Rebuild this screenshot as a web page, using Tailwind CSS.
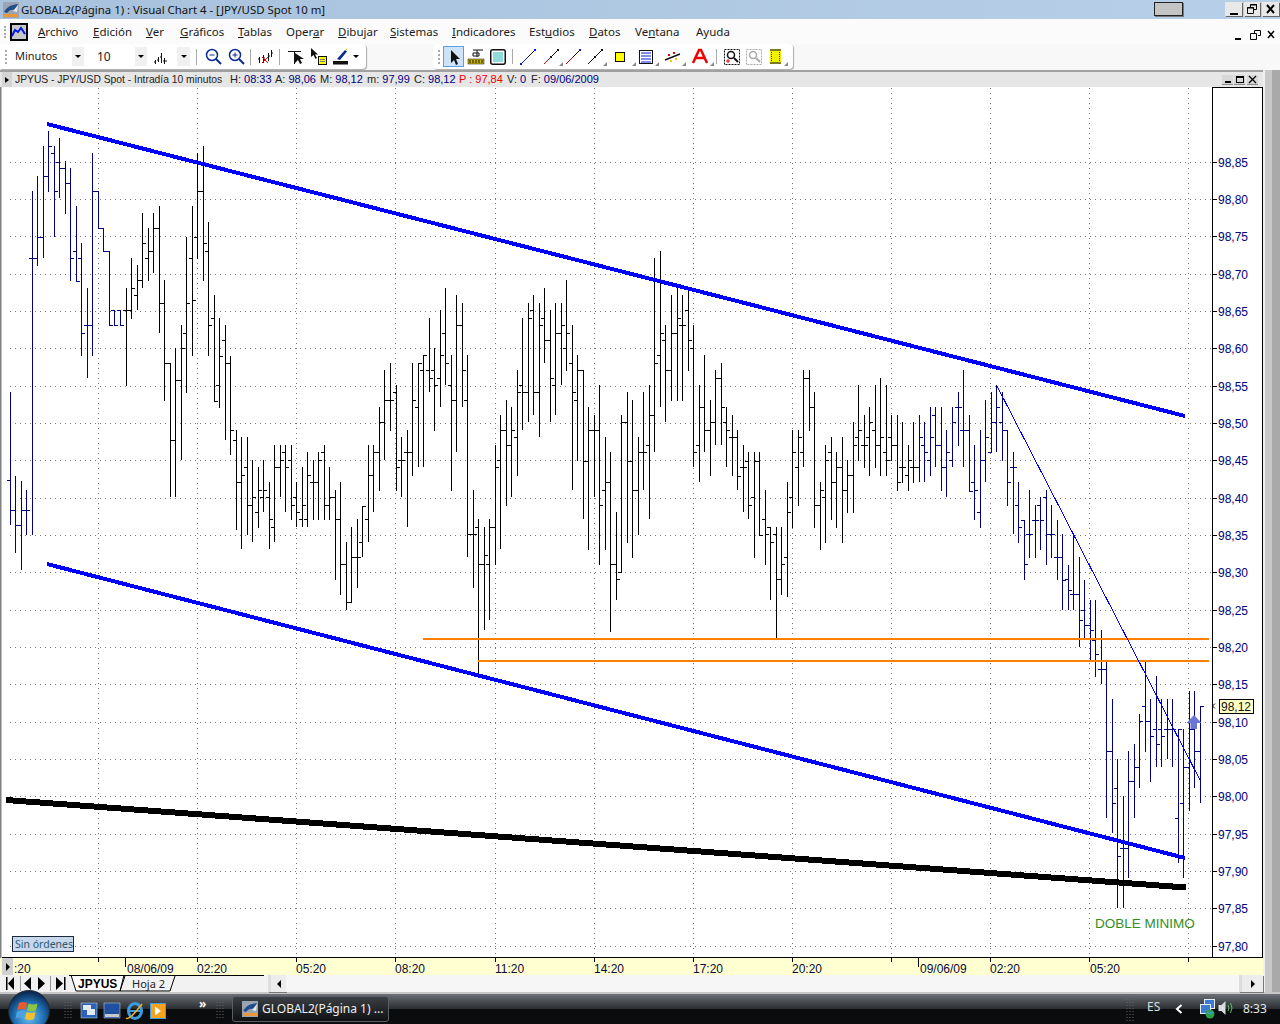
<!DOCTYPE html>
<html lang="es">
<head>
  <meta charset="UTF-8" />
  <title>GLOBAL2(Página 1) : Visual Chart 4 - [JPY/USD Spot 10 m]</title>
  <script src="https://cdn.jsdelivr.net/npm/@tailwindcss/browser@4"></script>
</head>
<body class="w-[1280px] h-[1024px] overflow-hidden bg-white text-black [font-family:'Noto_Sans',sans-serif]">

  <!-- Barra de título -->
  <div class="h-[19px] flex items-center bg-gradient-to-r from-[#a8c1dc] to-[#b7cfe8] relative">
    <svg class="ml-[3px] shrink-0" width="16" height="16" viewBox="0 0 16 16">
      <rect width="16" height="16" fill="#9aa5b1"/>
      <path d="M1 10 C5 3 10 3 15 2 L12 8 C9 7 6 8 4 11Z" fill="#1f4e8c"/>
      <path d="M10 9 L15 3 L14 10Z" fill="#e8e8e8"/>
      <rect x="1" y="12" width="14" height="3" fill="#e8973a"/>
    </svg>
    <span class="ml-[2px] text-[11.4px] leading-none text-[#111]">GLOBAL2(Página 1) : Visual Chart 4 - [JPY/USD Spot 10 m]</span>
    <div class="absolute left-[1154px] top-[2px] w-[29px] h-[14px] bg-[#c4c4c4] border border-[#222] shadow-[1px_1px_0_#777]"></div>
    <div class="absolute left-[1225px] top-[2px] flex gap-[2px]">
      <div class="w-[17px] h-[14px] bg-[#e8e8e8] shadow-[1px_1px_0_#666] flex items-end justify-center pb-[1px]"><div class="w-[8px] h-[2px] bg-black"></div></div>
      <div class="w-[16px] h-[14px] bg-[#e8e8e8] shadow-[1px_1px_0_#666]">
        <svg width="16" height="14"><path d="M6.5 5.5V2.5h6v5h-3M3.5 5.5h6v6h-6z" fill="none" stroke="#000"/><path d="M6 3h7M3 6h7" stroke="#000"/></svg>
      </div>
      <div class="w-[17px] h-[14px] bg-[#e8e8e8] shadow-[1px_1px_0_#666]">
        <svg width="17" height="14"><path d="M5 3l7 8M12 3l-7 8" stroke="#000" stroke-width="2"/></svg>
      </div>
    </div>
  </div>

  <!-- Menú -->
  <div class="h-[25px] flex items-center bg-[#fbfbfb] relative text-[11.5px] text-[#1a1a1a]">
    <div class="ml-[4px] w-[2px] h-[12px] border-l-2 border-dotted border-[#aaa]"></div>
    <svg class="ml-[4px] shrink-0" width="18" height="18" viewBox="0 0 18 18">
      <rect x="1" y="1" width="16" height="16" fill="#c8c8c8" stroke="#000" stroke-width="2"/>
      <path d="M2 13L5 7L8 9L11 5L15 11" fill="none" stroke="#0018e0" stroke-width="2"/>
    </svg>
    <div class="ml-[10px] flex">
      <span class="w-[55px]"><u>A</u>rchivo</span>
      <span class="w-[53px]"><u>E</u>dición</span>
      <span class="w-[34px]"><u>V</u>er</span>
      <span class="w-[58px]"><u>G</u>ráficos</span>
      <span class="w-[48px]"><u>T</u>ablas</span>
      <span class="w-[52px]">Oper<u>a</u>r</span>
      <span class="w-[52px]"><u>D</u>ibujar</span>
      <span class="w-[62px]"><u>S</u>istemas</span>
      <span class="w-[77px]"><u>I</u>ndicadores</span>
      <span class="w-[60px]">Est<u>u</u>dios</span>
      <span class="w-[46px]"><u>D</u>atos</span>
      <span class="w-[61px]">Ve<u>n</u>tana</span>
      <span>Ayuda</span>
    </div>
    <div class="absolute left-[1235px] top-[10px] flex items-center">
      <svg width="42" height="14" viewBox="0 0 42 14">
        <rect x="0" y="9" width="6" height="2" fill="#000"/>
        <path d="M19.5 4.5V1.5h6v5h-2.500M15.500 4.500h6v6h-6z" fill="none" stroke="#000"/>
        <path d="M33 2l6 7M39 2l-6 7" stroke="#000" stroke-width="1.500"/>
      </svg>
    </div>
  </div>

  <!-- Barras de herramientas -->
  <div class="h-[26px] bg-[#f8f8f8] relative text-[11px]">
    <div class="absolute left-0 top-0 w-[366px] h-[25px] bg-white shadow-[1px_1px_1px_#aaa] rounded-r-sm flex items-center">
      <div class="ml-[5px] w-[2px] h-[14px] border-l-2 border-dotted border-[#aaa]"></div>
      <div class="ml-[6px] w-[71px] h-[19px] bg-white flex items-center justify-between">
        <span class="ml-[2px] text-[#222]">Minutos</span>
        <span class="w-[12px] h-[19px] bg-[#f0f0f0] flex items-center justify-center"><span class="border-x-[3px] border-t-[3px] border-x-transparent border-t-black"></span></span>
      </div>
      <div class="ml-[9px] w-[54px] h-[19px] bg-white flex items-center justify-between">
        <span class="ml-[4px] text-[12px] text-[#222]">10</span>
        <span class="w-[12px] h-[19px] bg-[#f0f0f0] flex items-center justify-center"><span class="border-x-[3px] border-t-[3px] border-x-transparent border-t-black"></span></span>
      </div>
      <svg class="ml-[6px]" width="18" height="18" viewBox="0 0 18 18"><path d="M2.500 16v-4M5.500 14v-5M8.500 15V5M11.500 10v6M1 14h2M4 12h2M7 9h2M10 13h4" stroke="#111" fill="none"/></svg>
      <span class="ml-[6px] w-[13px] h-[19px] bg-[#f0f0f0] flex items-center justify-center"><span class="border-x-[3px] border-t-[3px] border-x-transparent border-t-black"></span></span>
      <div class="ml-[6px] w-px h-[16px] bg-[#aaa]"></div>
      <svg class="ml-[8px]" width="17" height="17" viewBox="0 0 17 17"><circle cx="7" cy="7" r="5.500" fill="none" stroke="#0a2a90" stroke-width="1.500"/><path d="M4.500 7h5" stroke="#0a2a90"/><path d="M11 11l5 5" stroke="#0a2a90" stroke-width="2"/></svg>
      <svg class="ml-[6px]" width="17" height="17" viewBox="0 0 17 17"><circle cx="7" cy="7" r="5.500" fill="none" stroke="#0a2a90" stroke-width="1.500"/><path d="M4.500 7h5M7 4.500v5" stroke="#0a2a90"/><path d="M11 11l5 5" stroke="#0a2a90" stroke-width="2"/></svg>
      <div class="ml-[5px] w-px h-[16px] bg-[#aaa]"></div>
      <svg class="ml-[6px]" width="17" height="17" viewBox="0 0 17 17"><path d="M2.500 15V9M6.500 15V7M11.500 13V5M14.500 9V2M1 11h2M6 10h2M11 8h2M14 5h2" stroke="#111" fill="none"/><path d="M5 9l6 6M11 9l-6 6" stroke="#e00000"/></svg>
      <div class="ml-[5px] w-px h-[16px] bg-[#aaa]"></div>
      <svg class="ml-[8px]" width="17" height="17" viewBox="0 0 17 17"><path d="M0 3.500h13M6.500 3.500V16" stroke="#111"/><path d="M7 5v10l3-3 2 4 2-1-2-4h4z" fill="#111"/></svg>
      <svg class="ml-[5px]" width="17" height="17" viewBox="0 0 17 17"><path d="M1 0v9l2.500-2 2 4 1.500-1-2-3.500h3z" fill="#111"/><rect x="8.500" y="8.500" width="8" height="8" fill="#ffff00" stroke="#111"/><path d="M10 11.500h5M10 13.500h5" stroke="#777"/></svg>
      <svg class="ml-[5px]" width="17" height="17" viewBox="0 0 17 17"><rect x="1" y="13" width="15" height="3.500" fill="#111"/><path d="M5 11L13 2l2 1.500L8 12z" fill="#0a2a90"/><path d="M13 2l2-1.500 0.500 2z" fill="#e8c93a"/></svg>
      <span class="ml-[4px] border-x-[3px] border-t-[3px] border-x-transparent border-t-black"></span>
    </div>

    <div class="absolute left-[433px] top-0 w-[360px] h-[25px] bg-white shadow-[1px_1px_1px_#aaa] rounded-sm">
      <div class="absolute left-[5px] top-[6px] w-[2px] h-[14px] border-l-2 border-dotted border-[#aaa]"></div>
      <div class="absolute left-[10px] top-[2px] w-[21px] h-[21px] bg-[#cfe3f7] border border-[#5aa0e8]"></div>
      <svg class="absolute left-0 top-0" width="360" height="25" viewBox="433 44 360 25">
        <path d="M451 50v13l3-3 2 5 2-1-2-5h4z" fill="#111"/>
        <!-- regla y marco -->
        <path d="M473 50h10M477 50v7M473 53h6v3h-6z" fill="none" stroke="#111"/>
        <rect x="468" y="59" width="16" height="5" fill="#c8b400" stroke="#111" stroke-width="0.500"/>
        <path d="M470 60v3M473 60v3M476 60v3M479 60v3M482 60v3" stroke="#111"/>
        <rect x="490.750" y="49.750" width="14.500" height="14.500" rx="2" fill="#fff" stroke="#111" stroke-width="1.500"/>
        <rect x="493" y="52" width="10" height="10" fill="#8edcdc"/>
        <line x1="512.500" x2="512.500" y1="49" y2="64" stroke="#aaa"/>
        <!-- líneas -->
        <path d="M521 64l14-14" stroke="#111"/><path d="M521 64l7-7" stroke="#0018e0"/><rect x="534" y="49" width="2" height="2" fill="#0018e0"/><rect x="520" y="63" width="2" height="2" fill="#0018e0"/>
        <path d="M544 64l14-14" stroke="#e00000"/><path d="M551 57l7-7" stroke="#111"/><rect x="557" y="49" width="2" height="2" fill="#111"/><rect x="550" y="56" width="2" height="2" fill="#111"/>
        <path d="M566 64l7-7" stroke="#e00000"/><path d="M573 57l7-7" stroke="#111"/><rect x="579" y="49" width="2" height="2" fill="#0018e0"/>
        <path d="M588 64l14-14" stroke="#111"/><rect x="601" y="49" width="2" height="2" fill="#111"/><rect x="594" y="56" width="2" height="2" fill="#111"/>
        <rect x="615.500" y="52.500" width="9" height="9" fill="#ffff00" stroke="#111"/>
        <rect x="639.500" y="50.500" width="13" height="13" fill="#fff" stroke="#111"/>
        <path d="M641 53h10M641 56h10M641 59h10M641 62h10" stroke="#0018e0"/>
        <path d="M665 60l15-6" stroke="#111" stroke-width="1.500"/>
        <rect x="668" y="54" width="2" height="2" fill="#e00000"/><rect x="673" y="52" width="2" height="2" fill="#e00000"/><rect x="675" y="58" width="2" height="2" fill="#e8c900"/><rect x="670" y="60" width="2" height="2" fill="#e8c900"/>
        <path d="M693 63l6-13h2l6 13M696 58h8" fill="none" stroke="#f00000" stroke-width="2.500"/>
        <line x1="716.500" x2="716.500" y1="49" y2="64" stroke="#aaa"/>
        <rect x="724.500" y="49.500" width="15" height="15" fill="none" stroke="#111" stroke-dasharray="2 1"/>
        <circle cx="731" cy="55" r="3.500" fill="none" stroke="#111" stroke-width="1.500"/><path d="M734 58l4 4" stroke="#111" stroke-width="2"/><path d="M726 61h4M728 59v4" stroke="#e00000"/>
        <rect x="746.500" y="49.500" width="15" height="15" fill="none" stroke="#aaa" stroke-dasharray="2 1"/>
        <circle cx="753" cy="55" r="3.500" fill="none" stroke="#aaa" stroke-width="1.500"/><path d="M756 58l4 4" stroke="#aaa" stroke-width="2"/>
        <rect x="770" y="49" width="11" height="15" fill="#f0f000"/>
        <path d="M770 49h11v2h-11zM770 62h11v2h-11z" fill="#7a7a20"/><path d="M771.500 52v9M779.500 52v9" stroke="#333" stroke-dasharray="1 1"/>
        <path d="M559 66l4-4v4zM603 66l4-4v4zM632 66l4-4v4zM655 66l4-4v4zM682 66l4-4v4zM710 66l4-4v4zM784 66l4-4v4z" fill="#888"/>
      </svg>
    </div>
  </div>

  <!-- Ventana del gráfico y marco derecho -->
  <div class="h-[922px] flex">
    <div class="w-[1263px] flex flex-col border-t-2 border-[#a0a0a0]">

      <div class="h-[15px] bg-[#e6e6e6] flex items-center relative text-[11px] [font-family:'Liberation_Sans',sans-serif] text-[#222] shrink-0">
        <div class="ml-[2px] w-[10px] h-[15px] bg-[#d4d4d4] flex items-center justify-center"><span class="border-y-[3px] border-l-[4px] border-y-transparent border-l-black"></span></div>
        <span class="ml-[3px] w-[215px] whitespace-nowrap text-[10.3px]">JPYUS - JPY/USD Spot - Intradía 10 minutos</span>
        <span class="w-[45px]">H: <span class="text-[#000080]">08:33</span></span>
        <span class="w-[45px]">A: <span class="text-[#000080]">98,06</span></span>
        <span class="w-[47px]">M: <span class="text-[#000080]">98,12</span></span>
        <span class="w-[47px]">m: <span class="text-[#000080]">97,99</span></span>
        <span class="w-[45px]">C: <span class="text-[#000080]">98,12</span></span>
        <span class="w-[48px] text-[#f00000]">P : 97,84</span>
        <span class="w-[24px]">V: <span class="text-[#000080]">0</span></span>
        <span>F: <span class="text-[#000080]">09/06/2009</span></span>
        <div class="absolute left-[1222px] top-[3px] flex gap-[1px]">
          <div class="w-[11px] h-[10px] bg-[#d8d8d8] border-b border-[#888] flex items-end justify-center pb-[1px]"><div class="w-[6px] h-[2px] bg-black"></div></div>
          <div class="w-[11px] h-[10px] bg-[#d8d8d8] border-b border-[#888] flex items-center justify-center"><div class="w-[8px] h-[7px] border border-black border-t-2"></div></div>
          <div class="ml-[1px] w-[11px] h-[10px] bg-[#d8d8d8] border-b border-[#888]"><svg width="11" height="9"><path d="M2 1l7 7M9 1l-7 7" stroke="#000" stroke-width="1.300"/></svg></div>
        </div>
      </div>

      <div class="relative h-[888px] shrink-0">
        <svg id="grafico" class="block [font-family:'Liberation_Sans',sans-serif]" width="1263" height="888" viewBox="0 87 1263 888">
          <rect x="0" y="87" width="1263" height="871" fill="#fff"/>
          <rect x="0" y="958" width="1263" height="17" fill="#ffffd2"/>
          <rect x="0" y="87" width="1.500" height="871" fill="#808080"/>
          <g id="rejilla" stroke="#777" stroke-dasharray="1 4" shape-rendering="crispEdges"></g>
          <path id="barras-azul" fill="none" stroke="#000080" shape-rendering="crispEdges"/>
          <path id="barras-negro" fill="none" stroke="#000" shape-rendering="crispEdges"/>

          <!-- Líneas de tendencia -->
          <g shape-rendering="crispEdges">
            <path d="M423 639H1209M478 661H1209" stroke="#ff8000" stroke-width="2"/>
            <path d="M47 124L1185 416" stroke="#0000ff" stroke-width="4"/>
            <path d="M47 564L1185 858" stroke="#0000ff" stroke-width="4"/>
            <path d="M6 800L1186 887.500" stroke="#000" stroke-width="6"/>
            <path d="M997 386L1200 780" stroke="#0000ff" stroke-width="1"/>
          </g>

          <!-- Flecha de último precio -->
          <path d="M1194 715l7.500 8h-4.500v6h-6.500v-6h-4z" fill="#6b75d6"/>

          <g stroke="#000" shape-rendering="crispEdges">
            <path d="M1212.500 87V958M1212 87.500H1262.500M1262.500 87V958M2 957.500H1262.500" fill="none"/>
          </g>
          <g id="ejes" stroke="#000" shape-rendering="crispEdges"></g>
          <g id="precios" fill="#000080" font-size="12"></g>
          <g id="horas" fill="#0a0a3a" font-size="12"></g>

          <text x="1095" y="928" fill="#2f8f1f" font-size="13.500">DOBLE MINIMO</text>
          <path d="M1215 703.500l-2.500 2.500 2.500 2.500" fill="none" stroke="#000"/>
          <rect x="1219.500" y="699.500" width="34" height="14" fill="#ffffc8" stroke="#000"/>
          <text x="1221" y="711" fill="#111" font-size="12">98,12</text>
        </svg>
        <div class="absolute left-[12px] top-[849px] w-[62px] h-[16px] bg-[#c8d8ec] border border-[#1a2a3a] text-[10.5px] leading-[14px] pl-[2px] text-[#2a5a70] whitespace-nowrap">Sin órdenes</div>
        <div class="absolute left-[2px] top-[871px] w-[11px] h-[17px] bg-[#d0d0d0] flex items-center justify-center"><span class="border-y-[4px] border-l-[4px] border-y-transparent border-l-black"></span></div>
      </div>

      <!-- Pestañas -->
      <div class="h-[17px] shrink-0 flex relative bg-[#f2f2f2]">
        <svg class="shrink-0" width="268" height="17" viewBox="0 0 268 17">
          <rect x="3" y="0" width="66" height="17" fill="#f0f0f0"/>
          <path d="M6 2v13h1.500V2zM8 8.500L14 2v13z" fill="#000"/>
          <path d="M31 2v13l-7-6.500zM38 2l7 6.500L38 15zM56 2l7 6.500L56 15zM64 2h1.500v13H64z" fill="#000"/>
          <path d="M20.500 1v15M50.500 1v15" stroke="#999"/>
          <path d="M71 0l5 16h44l4-16z" fill="#fff"/>
          <path d="M69 0.500H264M71 0l5 16h44l4-16M125 1l-5 15h50l5-15" fill="none" stroke="#000"/>
          <text x="78" y="13" font-size="12" font-weight="700" font-family="'Liberation Sans',sans-serif" fill="#000">JPYUS</text>
          <text x="132" y="13" font-size="11" font-family="'Noto Sans',sans-serif" fill="#222">Hoja 2</text>
        </svg>
        <div class="w-[18px] h-[17px] bg-[#ececec] border-l-[3px] border-[#ddd] shadow-[1px_1px_0_#777] flex items-center justify-center"><span class="border-y-[4px] border-r-[4px] border-y-transparent border-r-black"></span></div>
        <div class="flex-1 bg-[#f6f6f6]"></div>
        <div class="w-[24px] h-[17px] bg-[#ececec] border-l-[3px] border-[#ddd] shadow-[1px_1px_0_#777] flex items-center justify-center"><span class="border-y-[4px] border-l-[4px] border-y-transparent border-l-black"></span></div>
      </div>
    </div>

    <!-- Marco derecho -->
    <div class="w-[17px] flex">
      <div class="w-[2px] bg-[#f0f0f0]"></div>
      <div class="w-[7px] bg-[#c8c8c8]"></div>
      <div class="flex-1 bg-[#a9a9a9]"></div>
    </div>
  </div>

  <div class="h-[2px] bg-[#c8c8c8]"></div>

  <!-- Barra de tareas -->
  <div class="h-[30px] relative flex items-center bg-gradient-to-b from-[#6d7175] via-[#2a2e32] via-50% to-[#0a0c0e] to-50%">
    <svg class="absolute left-[8px] top-[-4px]" width="42" height="36" viewBox="0 0 42 36">
      <defs>
        <radialGradient id="orbe" cx="50%" cy="65%" r="60%"><stop offset="0" stop-color="#6bc2ef"/><stop offset="0.6" stop-color="#1f6fb5"/><stop offset="1" stop-color="#0c2c55"/></radialGradient>
      </defs>
      <circle cx="21" cy="21" r="20.500" fill="url(#orbe)" stroke="#23282c"/>
      <path d="M11 13q4-2 8 0l-1.500 7q-4-2-8 0z" fill="#ec5a2a"/>
      <path d="M20.500 13.500q4 2 9 0l-1.500 7q-4 2-9 0z" fill="#8cc63f"/>
      <path d="M9 21.500q4-2 8 0l-1.500 7q-4-2-8 0z" fill="#4aa3e0"/>
      <path d="M18.500 22q4 2 9 0l-1.500 7q-4 2-9 0z" fill="#f5c02c"/>
    </svg>

    <svg class="absolute left-[62px] top-[5px]" width="170" height="22" viewBox="0 0 170 22">
      <path d="M3 3v18M6 3v18M9 3v18" stroke="#666" stroke-dasharray="1 2"/>
      <rect x="19" y="4" width="16" height="15" fill="#2a63b8" stroke="#cfd8e8" stroke-width="0.500"/>
      <rect x="21" y="6" width="8" height="5" fill="#e4e8ef"/><rect x="25" y="10" width="8" height="6" fill="#e4e8ef"/>
      <rect x="42" y="4" width="16" height="15" fill="#1f4f9f" stroke="#cfd8e8" stroke-width="0.500"/>
      <rect x="43" y="15" width="14" height="3" fill="#c8c8c8"/>
      <ellipse cx="73" cy="12" rx="6.500" ry="7.500" fill="none" stroke="#3b9be0" stroke-width="3"/>
      <path d="M66 12h12" stroke="#3b9be0" stroke-width="2"/>
      <path d="M64 19q3 3 16-14" fill="none" stroke="#f0b020" stroke-width="1.500"/>
      <rect x="88.500" y="4.500" width="15" height="15" fill="#f6a21d" stroke="#3d9fe0"/>
      <path d="M93 7.500l6 4.500-6 4.500z" fill="#fff"/>
      <path d="M155 3v18M158 3v18M161 3v18" stroke="#666" stroke-dasharray="1 2"/>
    </svg>
    <span class="absolute left-[199px] top-[1px] text-[12px] font-bold text-white leading-[18px]">»</span>

    <div class="absolute left-[232px] top-[2px] w-[157px] h-[26px] rounded-[3px] border border-[#5b5f63] bg-gradient-to-b from-[#3c4044] to-[#0f1113] flex items-center">
      <svg class="ml-[9px] shrink-0" width="16" height="16" viewBox="0 0 16 16">
        <rect width="16" height="16" fill="#9aa5b1"/>
        <path d="M1 10 C5 3 10 3 15 2 L12 8 C9 7 6 8 4 11Z" fill="#1f4e8c"/>
        <path d="M10 9 L15 3 L14 10Z" fill="#e8e8e8"/>
        <rect x="1" y="12" width="14" height="3" fill="#e8973a"/>
      </svg>
      <span class="ml-[4px] text-[12px] text-[#eee] whitespace-nowrap">GLOBAL2(Página 1) ...</span>
    </div>

    <svg class="absolute left-[1125px] top-[4px]" width="12" height="24"><path d="M2 1v22M5 1v22M8 1v22" stroke="#666" stroke-dasharray="1 2"/></svg>
    <span class="absolute left-[1147px] top-[5px] text-[12px] text-[#ddd] leading-[16px]">ES</span>
    <svg class="absolute left-[1174px] top-[8px]" width="10" height="14"><path d="M7.500 3L3 7l4.500 4" fill="none" stroke="#fff" stroke-width="2"/></svg>
    <svg class="absolute left-[1199px] top-[4px]" width="36" height="22" viewBox="0 0 36 22">
      <rect x="5.500" y="1.500" width="10" height="9" fill="#3d7bd0" stroke="#e8eef5"/>
      <rect x="1.500" y="6.500" width="10" height="9" fill="#3d7bd0" stroke="#e8eef5"/>
      <circle cx="11" cy="16" r="4.500" fill="#2fa04a"/><path d="M8 14q3 3 6 0" stroke="#3b9be0" fill="none" stroke-width="1.500"/>
      <path d="M19.500 7h3l4-4v14l-4-4h-3z" fill="#d8dde2"/>
      <path d="M29 7q2 3 0 6M31.500 5q3 5 0 10" fill="none" stroke="#5ac05a"/>
    </svg>
    <span class="absolute left-[1243px] top-[7px] text-[12px] text-[#e8e8e8] leading-[16px]">8:33</span>
  </div>

  <script>
    // [máximo, mínimo, apertura (izq), cierre (der)] en píxeles de pantalla
    const bars = [
      [392,525,480,510],[476,553,510,525],[481,570,525,510],[490,535,510,510],[191,535,258,258],
      [176,266,258,237],[146,258,237,176],[131,192,176,146],[146,237,153,191],[138,198,162,168],
      [161,214,168,183],[168,281,183,258],[206,281,251,281],[243,356,258,333],[288,378,325,325],
      [153,356,325,191],[191,228,191,228],[228,251,228,251],[251,325,251,325],[310,325,310,325],
      [310,325,310,325],[288,386,310,310],[258,319,310,288],[265,310,295,280],[213,288,280,243],
      [228,281,258,251],[213,273,251,228],[206,333,228,303],[280,401,303,363],[363,497,363,440],
      [348,497,440,380],[325,460,380,348],[237,393,333,303],[206,356,258,300],[153,259,237,191],
      [146,281,191,243],[222,356,251,325],[295,401,318,401],[318,408,385,356],[325,440,340,363],
      [356,455,363,430],[430,530,440,482],[437,549,482,475],[437,535,467,505],[460,542,505,497],
      [467,528,512,490],[460,512,497,490],[482,549,497,519],[445,542,527,467],[445,497,467,460],
      [445,512,452,467],[445,520,460,505],[482,527,497,512],[467,527,519,505],[452,527,519,475],
      [460,520,482,482],[452,520,482,460],[445,520,452,505],[467,520,505,497],[490,580,497,519],
      [482,595,519,564],[542,610,564,602],[527,602,602,557],[519,588,557,557],[506,557,542,506],
      [445,542,519,475],[445,512,475,452],[407,491,452,422],[370,460,422,400],[363,431,400,400],
      [385,491,392,467],[437,497,460,460],[430,527,452,452],[363,476,452,400],[363,467,407,363],
      [355,467,370,355],[318,392,370,378],[348,431,370,385],[310,407,378,355],[288,385,333,363],
      [355,491,385,400],[295,452,400,325],[303,407,325,370],[355,557,400,534],[490,588,534,534],
      [519,676,527,564],[527,630,564,555],[519,620,564,527],[445,565,527,467],[415,549,460,430],
      [400,506,430,445],[407,497,445,430],[370,476,437,392],[318,430,385,392],[303,422,392,318],
      [295,415,310,392],[303,437,392,325],[288,363,318,340],[310,422,340,378],[303,415,385,333],
      [303,385,333,325],[280,371,348,333],[325,490,363,392],[355,461,400,370],[370,519,370,461],
      [407,550,461,430],[415,497,430,430],[385,565,430,505],[437,550,490,482],[452,632,482,564],
      [512,600,564,579],[415,572,572,422],[392,543,422,461],[400,558,461,490],[437,535,490,452],
      [392,490,452,452],[385,519,445,415],[258,452,415,363],[251,407,355,333],[325,422,340,370],
      [295,401,370,333],[288,401,333,318],[295,401,325,325],[288,371,310,340],[325,467,348,452],
      [385,482,445,407],[355,452,407,430],[400,476,430,422],[370,445,422,378],[363,445,378,407],
      [407,467,422,430],[415,476,437,437],[430,490,437,476],[445,512,467,467],[452,519,461,505],
      [452,558,497,461],[452,535,461,535],[490,565,519,534],[527,600,527,542],[527,639,534,579],
      [527,595,579,564],[482,597,557,512],[430,528,497,452],[430,506,467,437],[370,467,452,378],
      [370,431,378,407],[392,528,407,505],[482,550,505,490],[445,543,497,460],[437,520,452,482],
      [452,528,482,467],[437,543,467,490],[460,513,490,475],[422,513,475,445],[385,461,437,430],
      [415,468,445,445],[407,476,437,422],[385,468,430,445],[378,476,445,437],[385,476,452,460],
      [415,461,437,445],[415,491,445,482],[422,483,467,467],[445,491,475,460],[422,483,467,467],
      [415,482,467,437],[422,482,445,452],[407,476,460,437],[407,467,415,445],[407,491,445,467],
      [430,497,467,452],[407,467,460,422],[392,446,407,407],[370,467,430,430],[415,491,430,491],
      [445,520,482,490],[430,528,512,460],[400,482,460,437],[392,452,452,422],[385,452,422,407],
      [392,461,422,430],[430,506,430,482],[452,534,467,467],[482,543,505,527],[520,580,520,564],
      [490,558,534,534],[505,558,520,520],[497,550,505,520],[490,565,497,534],[505,558,534,534],
      [520,580,557,557],[534,610,557,580],[565,610,579,590],[534,610,594,594],[557,647,594,620],
      [580,640,610,625],[600,662,625,630],[600,677,640,654],[630,684,669,669],[661,818,669,751],
      [699,833,751,803],[759,908,788,856],[796,908,848,848],[751,878,848,781],[744,818,781,767],
      [714,788,767,721],[661,752,706,721],[699,782,721,736],[676,767,729,744],[699,767,729,736],
      [699,759,729,729],[699,767,729,729],[729,863,818,729],[729,878,803,767],[691,811,767,729],
      [691,788,729,751],[706,803,751,706]
    ];

    let azul = "", negro = "";
    bars.forEach((b, i) => {
      const x = Math.floor(10.3 + 5.51 * i);
      const d = `M${x + .5} ${b[0]}V${b[1]}M${x - 3} ${b[2] + .5}H${x + 1}M${x} ${b[3] + .5}H${x + 4}`;
      if (i <= 20 || i >= 165) azul += d; else negro += d;
    });
    document.getElementById("barras-azul").setAttribute("d", azul);
    document.getElementById("barras-negro").setAttribute("d", negro);

    const svgNS = "http://www.w3.org/2000/svg";
    const add = (parent, tag, attrs, text) => {
      const el = document.createElementNS(svgNS, tag);
      for (const k in attrs) el.setAttribute(k, attrs[k]);
      if (text) el.textContent = text;
      document.getElementById(parent).appendChild(el);
    };

    // rejilla vertical y marcas de tiempo
    for (let k = 0; k < 12; k++) {
      const x = Math.floor(98.7 + 99.1 * k) + .5;
      add("rejilla", "line", { x1: x, x2: x, y1: 88, y2: 957 });
      add("ejes", "line", { x1: x, x2: x, y1: 957, y2: 962 });
    }
    add("ejes", "line", { x1: 125.5, x2: 125.5, y1: 957, y2: 967 });
    add("ejes", "line", { x1: 918.5, x2: 918.5, y1: 957, y2: 967 });

    // rejilla horizontal y precios
    for (let k = 0; k < 22; k++) {
      const y = Math.round(161.7 + 37.33 * k) + .5;
      const precio = (98.85 - k * 0.05).toFixed(2).replace(".", ",");
      add("rejilla", "line", { x1: 10, x2: 1212, y1: y, y2: y });
      add("ejes", "line", { x1: 1212, x2: 1217, y1: y, y2: y });
      add("precios", "text", { x: 1218, y: y + 4 }, precio);
    }

    [[14, ":20"], [127, "08/06/09"], [197, "02:20"], [296, "05:20"], [395, "08:20"], [495, "11:20"], [594, "14:20"],
     [693, "17:20"], [792, "20:20"], [920, "09/06/09"], [990, "02:20"], [1090, "05:20"]].forEach(([x, t]) => {
      add("horas", "text", { x, y: 973 }, t);
    });
  </script>
</body>
</html>
